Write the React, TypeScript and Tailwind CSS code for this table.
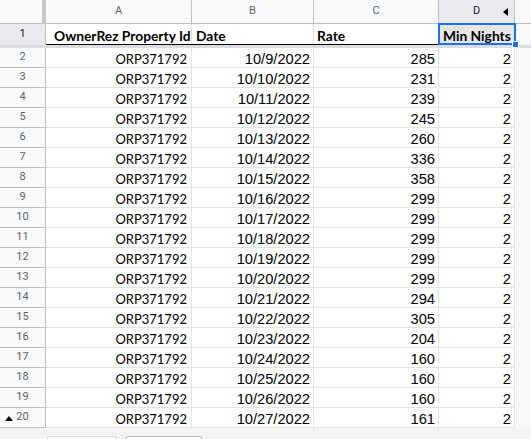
import React from "react";

const rows: [string, string, number][] = [
  ["ORP371792", "10/9/2022", 285],
  ["ORP371792", "10/10/2022", 231],
  ["ORP371792", "10/11/2022", 239],
  ["ORP371792", "10/12/2022", 245],
  ["ORP371792", "10/13/2022", 260],
  ["ORP371792", "10/14/2022", 336],
  ["ORP371792", "10/15/2022", 358],
  ["ORP371792", "10/16/2022", 299],
  ["ORP371792", "10/17/2022", 299],
  ["ORP371792", "10/18/2022", 299],
  ["ORP371792", "10/19/2022", 299],
  ["ORP371792", "10/20/2022", 299],
  ["ORP371792", "10/21/2022", 294],
  ["ORP371792", "10/22/2022", 305],
  ["ORP371792", "10/23/2022", 204],
  ["ORP371792", "10/24/2022", 160],
  ["ORP371792", "10/25/2022", 160],
  ["ORP371792", "10/26/2022", 160],
  ["ORP371792", "10/27/2022", 161],
];

const colHead = "flex items-center justify-center border-r border-[#c0c0c0] text-[11px] text-[#5f6368]";
const cell = "flex items-end justify-end border-r border-[#e2e3e3] pr-[3px] overflow-hidden whitespace-nowrap";

export default function App() {
  return (
    <div className="w-[531px] h-[439px] overflow-hidden bg-[#f8f9fa] text-black select-none" style={{ fontFamily: "'Liberation Sans', Arial, sans-serif" }}>
      {/* column letters */}
      <div className="flex h-[24px] border-b border-[#c0c0c0] bg-[#f8f9fa]" style={{ fontFamily: "Roboto, Arial, sans-serif" }}>
        <div className="w-[46px] flex justify-end">
          <div className="w-[4px] bg-[#c7c7c7]" />
        </div>
        <div className={`w-[146px] ${colHead}`}>A</div>
        <div className={`w-[122px] ${colHead}`}>B</div>
        <div className={`w-[125px] ${colHead}`}>C</div>
        <div className={`relative w-[76px] ${colHead} bg-[#e8eaed] text-[#202124]`}>
          D
          <span className="absolute right-[6px] top-[8px] w-0 h-0 border-y-[4px] border-y-transparent border-r-[5px] border-r-black" />
        </div>
        <div className="flex-1" />
      </div>

      {/* header row 1 */}
      <div className="flex h-[21px]">
        <div className="w-[46px] flex items-center justify-center bg-[#e8eaed] border-r border-[#c0c0c0] text-[11px] text-[#202124]" style={{ fontFamily: "Roboto, Arial, sans-serif" }}>1</div>
        <div className="flex bg-white border-b border-black font-bold text-[13.8px] leading-[16px] text-[#000]" style={{ fontFamily: "Lato, 'Open Sans', sans-serif" }}>
          <div className="w-[146px] pl-[8px] flex items-end border-r border-[#e2e3e3] whitespace-nowrap">OwnerRez Property Id</div>
          <div className="w-[122px] pl-[4px] flex items-end border-r border-[#e2e3e3]">Date</div>
          <div className="w-[125px] pl-[3px] flex items-end border-r border-[#e2e3e3]">Rate</div>
          <div className="relative w-[76px] pl-[4px] flex items-end bg-[#e6e6e6] whitespace-nowrap">
            Min Nights
            <div className="absolute -left-[1px] -top-[1px] -right-[1px] -bottom-[1px] border-2 border-[#1a73e8]" />
            <div className="absolute -right-[4px] -bottom-[4px] w-[7px] h-[7px] bg-[#1a73e8] border border-white z-10" />
          </div>
        </div>
        <div className="flex-1" />
      </div>

      {/* freeze bar */}
      <div className="h-[3px] bg-[#dadce0]" />

      {/* data rows */}
      {rows.map(([id, date, rate], i) => (
        <div key={i} className="flex h-[20px]">
          <div className="relative w-[46px] flex items-center justify-center bg-[#f8f9fa] border-r border-b border-[#c0c0c0] text-[11px] text-[#5f6368]" style={{ fontFamily: "Roboto, Arial, sans-serif" }}>
            {i === rows.length - 1 && (
              <span className="absolute left-[5px] top-[8px] w-0 h-0 border-x-[4px] border-x-transparent border-b-[5px] border-b-black" />
            )}
            {i + 2}
          </div>
          <div className="flex bg-white border-b border-[#e2e3e3] text-[14.67px] leading-[16px]">
            <div className={`w-[146px] ${cell} pr-[4px] text-[13px]`} style={{ fontFamily: "Lato, sans-serif" }}>{id}</div>
            <div className={`w-[122px] ${cell}`}>{date}</div>
            <div className={`w-[125px] ${cell}`}>{rate}</div>
            <div className={`w-[76px] ${cell}`}>2</div>
          </div>
          <div className="flex-1" />
        </div>
      ))}

      {/* sheet tabs bar */}
      <div className="h-[11px] flex items-end bg-[#f1f3f4] pl-[47px] gap-[8px]">
        <div className="w-[70px] h-[3px] bg-[#f8f9fa] border-t border-x border-[#dadce0] rounded-t-[2px]" />
        <div className="w-[77px] h-[3px] bg-white border-t border-x border-[#c0c0c0] rounded-t-[2px]" />
      </div>
    </div>
  );
}
